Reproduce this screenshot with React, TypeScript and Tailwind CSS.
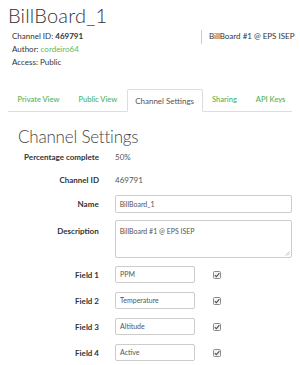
const font = { fontFamily: "Lato, 'Open Sans', sans-serif" };

function Check() {
  return (
    <svg width="8" height="8" viewBox="0 0 8 8" className="ml-[18px] shrink-0">
      <rect x="0.5" y="0.5" width="7" height="7" rx="1" fill="#f4f4f4" stroke="#8a8a8a" />
      <path d="M1.8 4.2 L3.4 5.6 L6.4 2.2" fill="none" stroke="#555" strokeWidth="1.2" />
    </svg>
  );
}

const tabs = ["Private View", "Public View", "Channel Settings", "Sharing", "API Keys"];

export default function App() {
  const fields = ["PPM", "Temperature", "Altitude", "Active"];
  return (
    <div className="w-[300px] h-[365px] overflow-hidden bg-white px-2 text-[#333]" style={font}>
      <h1 className="pt-[2px] text-[20px] font-light leading-[26px] tracking-[0.2px]">BillBoard_1</h1>

      <div className="mt-[2px] flex whitespace-nowrap">
        <div className="w-[193px] shrink-0 pl-1 text-[8px] leading-[13px]">
          <p>
            Channel ID: <span className="font-bold">469791</span>
          </p>
          <p>
            Author: <span className="text-[#5cb85c]">cordeiro64</span>
          </p>
          <p>Access: Public</p>
        </div>
        <div className="h-[14px] border-l border-[#ccc] pl-[7px] text-[8px] leading-[13px]">
          BillBoard #1 @ EPS ISEP
        </div>
      </div>

      {/* tabs */}
      <div className="mt-[20px] flex h-[23px] whitespace-nowrap border-b border-[#ddd] text-[7.5px]">
        {tabs.map((t) => (
          <div
            key={t}
            className={
              t === "Channel Settings"
                ? "-mb-px flex shrink-0 items-center rounded-t-[2px] border border-b-white border-[#ddd] bg-white px-[7.5px] text-[8px] text-[#555]"
                : "flex shrink-0 items-center border border-transparent px-[8.5px] font-semibold text-[#5cb85c]"
            }
          >
            {t}
          </div>
        ))}
      </div>

      <h2 className="ml-[10px] mt-[16px] text-[17px] font-light leading-[18px] tracking-[-0.2px] text-[#444]">
        Channel Settings
      </h2>

      <div className="whitespace-nowrap text-[8px]">
        <div className="flex h-[22px] items-center">
          <span className="w-[91px] text-right font-bold">Percentage complete</span>
          <span className="ml-4 text-[#555]">50%</span>
        </div>
        <div className="flex h-[24px] items-center">
          <span className="w-[91px] text-right font-bold">Channel ID</span>
          <span className="ml-4 text-[#555]">469791</span>
        </div>
        <div className="mt-[3px] flex h-[18px] items-center">
          <span className="w-[91px] text-right font-bold">Name</span>
          <div className="ml-4 flex h-full w-[178px] items-center rounded-[2px] border border-[#ccc] pl-[4px] text-[7px] text-[#555]">
            BillBoard_1
          </div>
        </div>
        <div className="mt-[7px] flex h-[38px] items-start">
          <span className="w-[91px] pt-[6px] text-right font-bold leading-[11px]">Description</span>
          <div className="relative ml-4 h-full w-[178px] rounded-[2px] border border-[#ccc] pl-[4px] pt-[5px] text-[7px] leading-[10px] text-[#555]">
            BillBoard #1 @ EPS ISEP
            <svg width="5" height="5" viewBox="0 0 5 5" className="absolute bottom-[1px] right-[1px]">
              <path d="M4.5 0.5 L0.5 4.5 M4.5 2.5 L2.5 4.5" stroke="#aaa" strokeWidth="0.7" />
            </svg>
          </div>
        </div>
        {fields.map((f, i) => (
          <div key={f} className={`flex h-[17px] items-center ${i === 0 ? "mt-[8px]" : "mt-[9px]"}`}>
            <span className="w-[91px] text-right font-bold">Field {i + 1}</span>
            <div className="ml-4 flex h-full w-[80px] items-center rounded-[2px] border border-[#ccc] pl-[4px] text-[7px] text-[#555]">
              {f}
            </div>
            <Check />
          </div>
        ))}
      </div>
    </div>
  );
}
